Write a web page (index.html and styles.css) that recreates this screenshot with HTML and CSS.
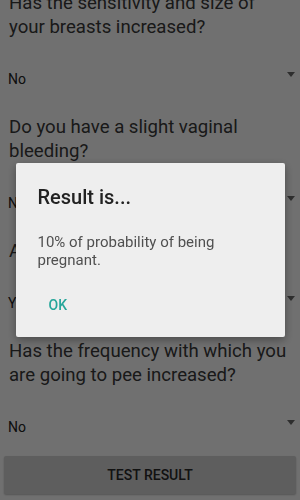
FILE: index.html
```html
<!DOCTYPE html>
<html>
<head>
    <title>Pregnancy Test</title>
    <link rel="stylesheet" href="styles.css">
</head>
<body>
    <div class="page">
        <p class="question">Has the sensitivity and size of your breasts increased?</p>
        <div class="spinner"><span>No</span><i class="arrow"></i></div>

        <p class="question">Do you have a slight vaginal bleeding?</p>
        <div class="spinner"><span>No</span><i class="arrow"></i></div>

        <p class="question">Are you more tired than usual?</p>
        <div class="spinner"><span>Yes</span><i class="arrow"></i></div>

        <p class="question">Has the frequency with which you are going to pee increased?</p>
        <div class="spinner"><span>No</span><i class="arrow"></i></div>

        <button class="test-btn">Test result</button>
    </div>

    <div class="scrim">
        <div class="dialog">
            <div class="dialog-title">Result is...</div>
            <div class="dialog-msg">10% of probability of being pregnant.</div>
            <div class="dialog-actions">
                <span class="dialog-btn">OK</span>
            </div>
        </div>
    </div>
</body>
</html>
```

FILE: styles.css
```css
* {
    box-sizing: border-box;
}

html, body {
    margin: 0;
    height: 100%;
    overflow: hidden;
}

body {
    font-family: Roboto, "Liberation Sans", sans-serif;
    background-color: #ffffff;
}

.page {
    height: 500px;
    display: flex;
    flex-direction: column;
    justify-content: flex-end;
}

.question {
    margin: 14px 0;
    padding: 0 8px 0 9px;
    font-size: 18.6px;
    line-height: 24px;
    color: #3a3a3a;
    flex-shrink: 0;
}

.spinner {
    height: 48px;
    padding: 0 5px 0 8px;
    display: flex;
    align-items: center;
    justify-content: space-between;
    font-size: 14px;
    color: #222;
    flex-shrink: 0;
}

.spinner span {
    margin-top: 4px;
}

.arrow {
    width: 0;
    height: 0;
    border-left: 4px solid transparent;
    border-right: 4px solid transparent;
    border-top: 5px solid #6a6a6a;
    margin-bottom: 5px;
}

.test-btn {
    margin: 7px 4px 6px;
    height: 38px;
    border: none;
    border-radius: 2px;
    background-color: #d6d6d6;
    box-shadow: 0 1px 2px rgba(0, 0, 0, 0.25);
    font-family: Roboto, "Liberation Sans", sans-serif;
    font-size: 14px;
    font-weight: 500;
    text-transform: uppercase;
    color: #2a2a2a;
    flex-shrink: 0;
}

.scrim {
    position: fixed;
    top: 0;
    left: 0;
    right: 0;
    bottom: 0;
    background-color: rgba(0, 0, 0, 0.56);
    display: flex;
    align-items: center;
    justify-content: center;
}

.dialog {
    width: 269px;
    padding: 22px 22px 24px;
    background-color: #eeeeee;
    border-radius: 2px;
    box-shadow: 0 3px 10px rgba(0, 0, 0, 0.35);
}

.dialog-title {
    font-size: 20px;
    line-height: 24px;
    font-weight: 500;
    color: #222;
}

.dialog-msg {
    margin-top: 24px;
    font-size: 15px;
    line-height: 18px;
    color: #505050;
}

.dialog-actions {
    margin-top: 28px;
    padding-left: 11px;
}

.dialog-btn {
    display: block;
    font-size: 14px;
    line-height: 16px;
    font-weight: 500;
    color: #26a69a;
}
```
